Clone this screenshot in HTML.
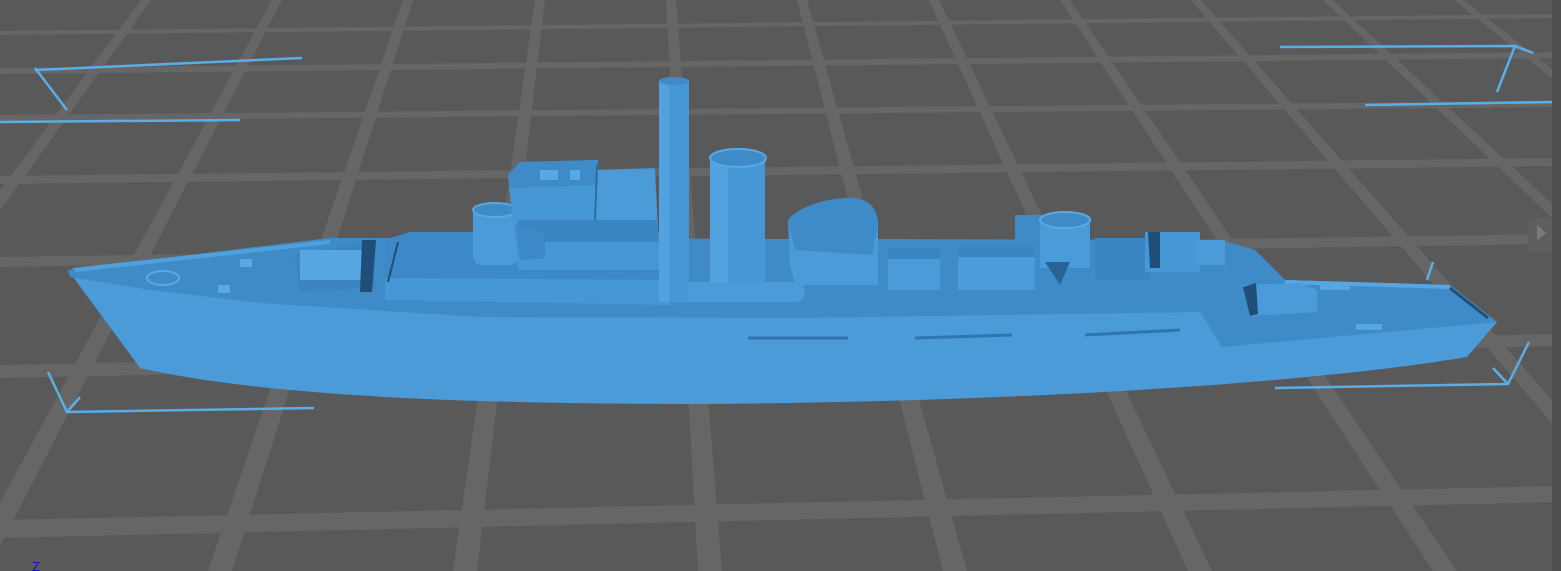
<!DOCTYPE html>
<html><head><meta charset="utf-8"><style>
html,body{margin:0;padding:0;background:#595959;overflow:hidden}
svg{display:block}
</style></head><body>
<svg width="1561" height="571" viewBox="0 0 1561 571" xmlns="http://www.w3.org/2000/svg">
<rect width="1561" height="571" fill="#595959"/>
<g fill="#666666">
<polygon points="0,31 1561,14 1561,18 0,35"/>
<polygon points="0,68 1561,52 1561,58 0,74"/>
<polygon points="0,115 1561,101 1561,107 0,121"/>
<polygon points="0,176 1561,158 1561,166 0,184"/>
<polygon points="0,257 1561,234 1561,244 0,267"/>
<polygon points="0,365 1561,334 1561,346 0,378"/>
<polygon points="0,520 1561,486 1561,502 0,538"/>
<polygon points="141,0 151,0 -258,571 -282,571"/>
<polygon points="272,0 282,0 -13,571 -37,571"/>
<polygon points="403,0 413,0 232,571 208,571"/>
<polygon points="535,0 545,0 477,571 453,571"/>
<polygon points="666,0 676,0 722,571 698,571"/>
<polygon points="797,0 807,0 967,571 943,571"/>
<polygon points="929,0 939,0 1212,571 1188,571"/>
<polygon points="1060,0 1070,0 1457,571 1433,571"/>
<polygon points="1191,0 1201,0 1702,571 1678,571"/>
<polygon points="1323,0 1333,0 1947,571 1923,571"/>
<polygon points="1454,0 1464,0 2192,571 2168,571"/>
<polygon points="1586,0 1596,0 2437,571 2413,571"/>
</g>
<rect x="1552" y="0" width="9" height="571" fill="#505050"/>
<rect x="1528" y="218" width="24" height="34" rx="4" fill="#5e5e5e"/>
<polygon points="1537,225 1546,233 1537,241" fill="#7a7a7a"/>

<!-- hull -->
<path d="M68,270 L330,238 L1220,240 L1255,250 L1285,280 L1450,285 L1497,322 L1467,357 C1300,385 1000,402 700,404 C450,404 260,395 140,368 Z" fill="#4a9bd8"/>
<!-- deck -->
<path d="M68,270 L330,238 L1220,240 L1255,250 L1285,280 L1450,285 L1497,322 L1222,347 L1200,312 L800,318 L480,317 L260,303 L150,290 L70,277 Z" fill="#3f8bc8"/>
<path d="M72,268 L330,240 L330,244 L76,272 Z" fill="#4fa0dc"/>
<path d="M1285,280 L1450,285 L1450,289 L1285,284 Z" fill="#56a6e2"/>
<ellipse cx="163" cy="278" rx="16" ry="7" fill="none" stroke="#5aa8e2" stroke-width="2"/>
<rect x="240" y="259" width="12" height="8" fill="#5aa8e2"/>
<rect x="218" y="285" width="12" height="8" fill="#5aa8e2"/>
<!-- forward gun -->
<polygon points="295,255 335,248 365,240 375,238 375,288 300,292" fill="#3b85c2"/>
<rect x="300" y="250" width="65" height="30" fill="#56a6e2"/>
<polygon points="362,240 376,240 372,292 360,292" fill="#1f4f78"/>
<!-- long deckhouse -->
<polygon points="385,240 410,232 670,232 670,305 385,300" fill="#4597d6"/>
<polygon points="385,240 410,232 670,232 670,280 385,278" fill="#3d88c6"/>
<line x1="398" y1="242" x2="388" y2="282" stroke="#1f4f78" stroke-width="2"/>
<!-- tub -->
<rect x="473" y="205" width="45" height="60" rx="8" fill="#4a9bd8"/>
<ellipse cx="495" cy="210" rx="22" ry="7" fill="#3f8bc8" stroke="#5aa8e2" stroke-width="2"/>
<!-- bridge -->
<polygon points="508,175 520,162 598,160 598,170 655,168 660,270 518,270" fill="#4597d6"/>
<polygon points="508,175 520,162 598,160 598,185 510,188" fill="#3f8bc8"/>
<rect x="598" y="170" width="57" height="52" fill="#4a9bd8"/>
<rect x="518" y="220" width="140" height="22" fill="#3b85c2"/>
<polygon points="515,225 545,232 545,258 520,260" fill="#3d88c6"/>
<rect x="540" y="170" width="18" height="10" fill="#5aa8e2"/>
<rect x="570" y="170" width="10" height="10" fill="#5aa8e2"/>
<line x1="597" y1="165" x2="595" y2="220" stroke="#2a6496" stroke-width="1.5"/>
<!-- funnel base -->
<ellipse cx="740" cy="295" rx="65" ry="16" fill="#3f8bc8"/>
<rect x="675" y="282" width="130" height="20" rx="10" fill="#4a9bd8"/>
<rect x="659" y="80" width="30" height="222" fill="#4597d6"/>
<rect x="659" y="80" width="10" height="222" fill="#52a2df"/>
<ellipse cx="674" cy="81" rx="15" ry="4" fill="#3f8bc8"/>
<rect x="710" y="158" width="55" height="125" fill="#4597d6"/>
<rect x="710" y="158" width="18" height="125" fill="#52a2df"/>
<ellipse cx="738" cy="158" rx="28" ry="9" fill="#3f8bc8" stroke="#5aa8e2" stroke-width="2"/>
<!-- rounded structure -->
<path d="M788,220 C800,205 830,198 850,198 C870,198 878,210 878,225 L878,285 L795,285 L790,265 Z" fill="#4a9bd8"/>
<path d="M788,220 C800,205 830,198 850,198 C870,198 878,210 878,225 L872,255 L795,250 Z" fill="#3f8bc8"/>
<rect x="888" y="247" width="52" height="43" fill="#4a9bd8"/>
<rect x="888" y="247" width="52" height="12" fill="#3b85c2"/>
<rect x="958" y="245" width="77" height="45" fill="#4a9bd8"/>
<rect x="958" y="245" width="77" height="12" fill="#3b85c2"/>
<!-- aft structures -->
<rect x="1015" y="215" width="35" height="30" fill="#3f8bc8"/>
<rect x="1040" y="218" width="50" height="50" fill="#4a9bd8"/>
<ellipse cx="1065" cy="220" rx="25" ry="8" fill="#3f8bc8" stroke="#5aa8e2" stroke-width="2"/>
<polygon points="1045,262 1070,262 1060,285" fill="#2a6496"/>
<rect x="1095" y="238" width="55" height="42" fill="#3b85c2"/>
<rect x="1145" y="232" width="55" height="40" fill="#4597d6"/>
<polygon points="1148,232 1160,232 1160,268 1150,268" fill="#1f4f78"/>
<rect x="1195" y="240" width="30" height="25" fill="#4a9bd8"/>
<!-- stern -->
<polygon points="1243,285 1300,283 1317,290 1317,312 1250,316" fill="#4a9bd8"/>
<polygon points="1243,287 1256,283 1258,314 1250,316" fill="#1f4f78"/>
<rect x="1320" y="282" width="30" height="8" fill="#56a6e2"/>
<rect x="1356" y="324" width="26" height="6" fill="#56a6e2"/>
<line x1="1450" y1="288" x2="1488" y2="318" stroke="#1f4f78" stroke-width="3"/>
<g fill="none" stroke="#2f75b0" stroke-width="3">
<path d="M748,338 L848,338"/><path d="M915,338 L1012,335"/><path d="M1085,335 L1180,330"/>
</g>
<!-- bounding brackets -->
<g stroke="#5aaee8" stroke-width="2.5" fill="none">
<path d="M35,70 L302,58"/><path d="M0,122 L240,120"/><path d="M35,68 L67,110"/>
<path d="M1280,47 L1515,46 L1497,92"/><path d="M1515,46 L1533,53"/><path d="M1365,105 L1552,102"/>
<path d="M48,372 L67,412 L314,408"/><path d="M67,412 L80,397"/>
<path d="M1275,388 L1508,384 L1529,342"/><path d="M1508,384 L1493,368"/>
<path d="M1427,280 L1433,262"/>
</g>
<text x="32" y="571" font-family="Liberation Sans, sans-serif" font-size="13" fill="#1010cc">Z</text>
</svg>
</body></html>
